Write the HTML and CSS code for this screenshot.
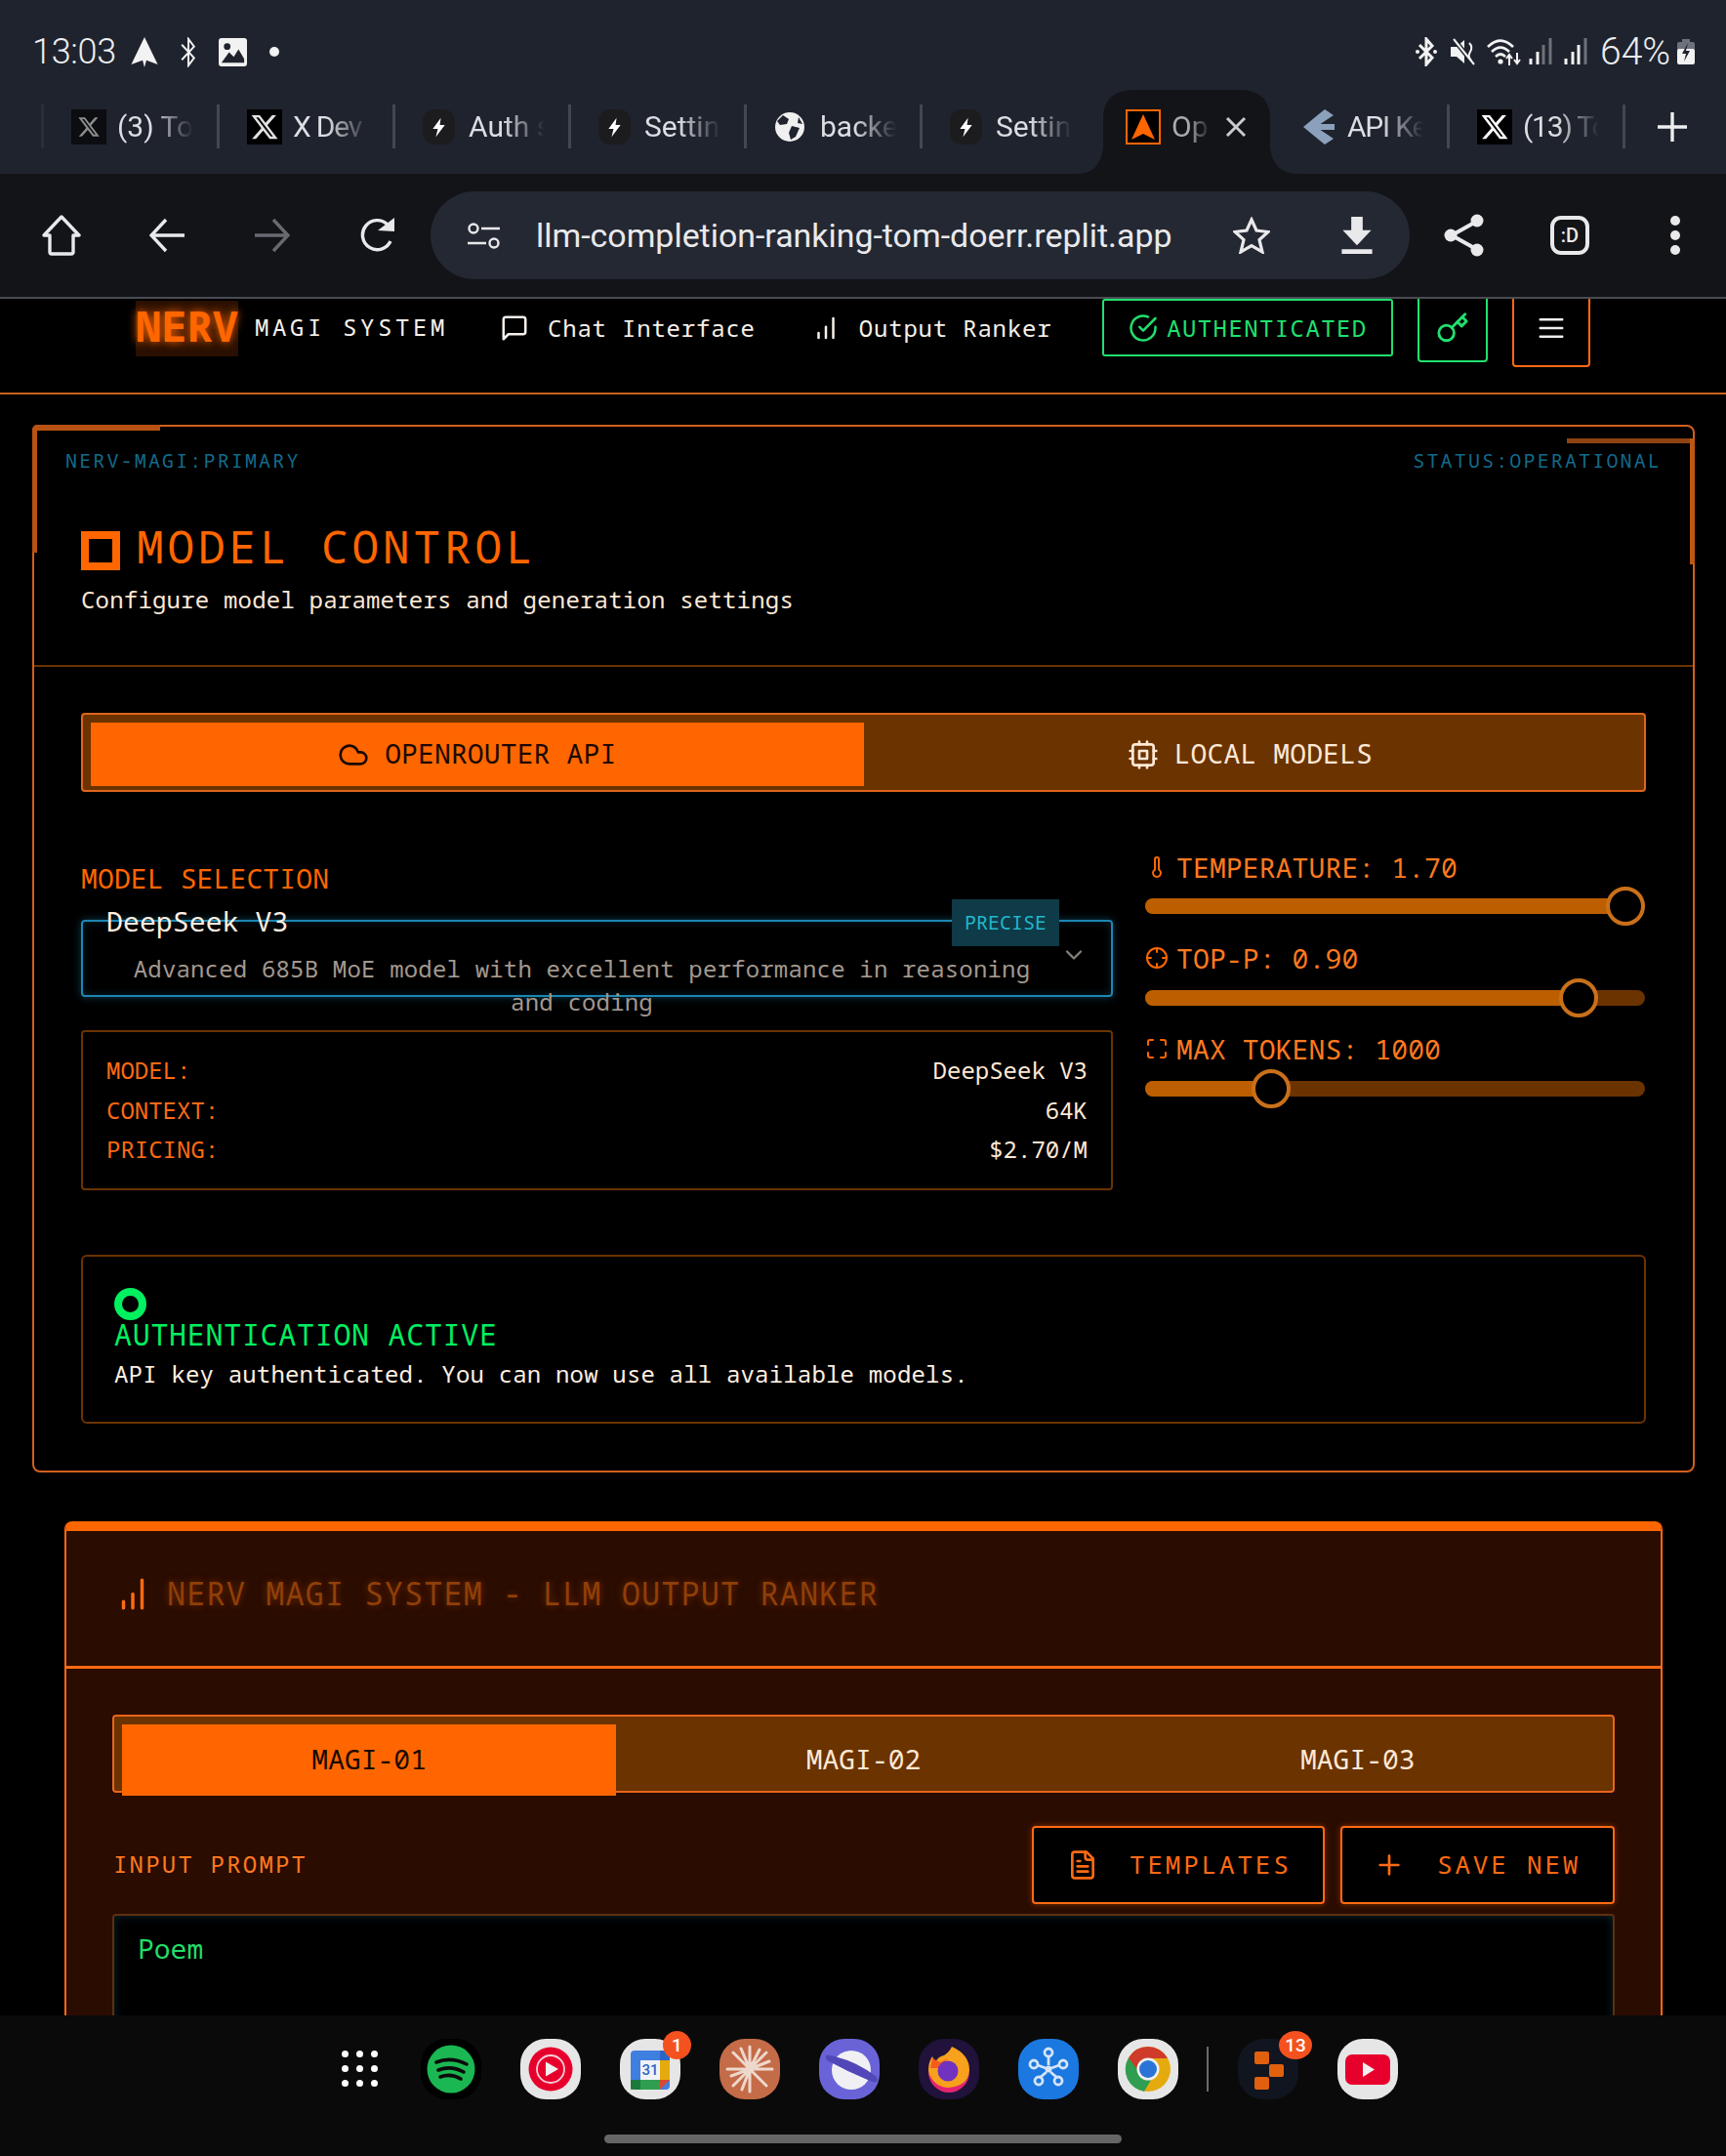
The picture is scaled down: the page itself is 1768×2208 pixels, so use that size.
FILE: index.html
```html
<!DOCTYPE html>
<html lang="en">
<head>
<meta charset="utf-8">
<title>NERV MAGI System</title>
<link rel="stylesheet" href="styles.css">
</head>
<body>
<div class="chrome">
  <div class="status">
    <div class="status-left">
      <span class="clock">13:03</span>
      <svg class="si si-nav" viewBox="0 0 28 32"><path d="M14 0 28 29 16 24.5 14 32 12 24.5 0 29Z" fill="#f2f2f2"/></svg>
      <svg class="si si-bt" viewBox="0 0 20 32"><path d="M3 8 16 22 10 30V2L16 10 3 24" fill="none" stroke="#f2f2f2" stroke-width="2"/></svg>
      <svg class="si si-img" viewBox="0 0 30 30"><rect width="30" height="30" rx="3" fill="#f2f2f2"/><circle cx="9" cy="9" r="3.5" fill="#1f232d"/><path d="M3 26 11 15 16 20 21 12 27 22V26Z" fill="#1f232d"/></svg>
      <span class="dot"></span>
    </div>
    <div class="status-right">
      <svg class="si si-bt2" viewBox="0 0 24 30"><path d="M5 8 18 21 12 28V2L18 9 5 22" fill="none" stroke="#f2f2f2" stroke-width="3"/><circle cx="3" cy="15" r="2" fill="#f2f2f2"/><circle cx="21" cy="15" r="2" fill="#f2f2f2"/></svg>
      <svg class="si si-mute" viewBox="0 0 27 30"><path d="M1 10H7L15 3V27L7 20H1Z" fill="#f2f2f2"/><path d="M4 2 25 28" stroke="#1f232d" stroke-width="5"/><path d="M4 2 25 28" stroke="#f2f2f2" stroke-width="2"/><path d="M20 6q4 4 1 9t1 9" fill="none" stroke="#f2f2f2" stroke-width="2"/></svg>
      <svg class="si si-wifi" viewBox="0 0 36 30"><path d="M2 10Q15-3 28 10M6 15Q15 6 24 15M10 20Q15 15 20 20" fill="none" stroke="#f2f2f2" stroke-width="2.6"/><circle cx="15" cy="25" r="2.6" fill="#f2f2f2"/><path d="M24 29V18M21 22l3-4 3 4M32 16V27M29 23l3 4 3-4" fill="none" stroke="#f2f2f2" stroke-width="2"/></svg>
      <svg class="si si-sig" viewBox="0 0 24 30"><path d="M2 28V22M9 28V15" stroke="#f2f2f2" stroke-width="3"/><path d="M15 28V8M22 28V1" stroke="#6d717a" stroke-width="3"/></svg>
      <svg class="si si-sig sig-b" viewBox="0 0 24 30"><path d="M2 28V22M9 28V15M15 28V8" stroke="#f2f2f2" stroke-width="3"/><path d="M22 28V1" stroke="#6d717a" stroke-width="3"/></svg>
      <span class="pct">64%</span>
      <svg class="si si-bat" viewBox="0 0 18 26"><path d="M5 0h8v3H5z" fill="#6d717a"/><rect y="3" width="18" height="9" rx="2" fill="#6d717a"/><rect y="10" width="18" height="16" rx="2" fill="#f2f2f2"/><path d="M11 4 5 15H9L7 23 13 12H9Z" fill="#1f232d"/></svg>
    </div>
  </div>
  <div class="tabs">
    <div class="tab sep first">
      <span class="fav fav-x dim"><svg viewBox="0 0 24 24"><path d="M18.2 2.3h3.3l-7.2 8.2 8.5 11.3h-6.7l-5.2-6.8-6 6.8H1.7l7.7-8.8L1.3 2.3h6.8l4.7 6.2zm-1.1 17.5h1.8L7.1 4.1h-2z"/></svg></span>
      <span class="tab-text">(3) To</span>
    </div>
    <div class="tab sep">
      <span class="fav fav-x"><svg viewBox="0 0 24 24"><path d="M18.2 2.3h3.3l-7.2 8.2 8.5 11.3h-6.7l-5.2-6.8-6 6.8H1.7l7.7-8.8L1.3 2.3h6.8l4.7 6.2zm-1.1 17.5h1.8L7.1 4.1h-2z"/></svg></span>
      <span class="tab-text tab-tight">X Dev</span>
    </div>
    <div class="tab sep">
      <span class="fav fav-bolt"><svg viewBox="0 0 32 32"><path d="M18 7 10 18H15L13 26 22 14H17Z" fill="#fff"/></svg></span>
      <span class="tab-text">Auth s</span>
    </div>
    <div class="tab sep">
      <span class="fav fav-bolt"><svg viewBox="0 0 32 32"><path d="M18 7 10 18H15L13 26 22 14H17Z" fill="#fff"/></svg></span>
      <span class="tab-text">Settin</span>
    </div>
    <div class="tab sep">
      <span class="fav fav-globe"><svg viewBox="0 0 32 32"><circle cx="16" cy="16" r="15" fill="#f0f0f0"/><path d="M9 4 15 8 13 13 6 14 3 10ZM18 15 26 17 22 26 17 29 15 22ZM25 6 29 13 24 12Z" fill="#1f232d"/></svg></span>
      <span class="tab-text">backe</span>
    </div>
    <div class="tab">
      <span class="fav fav-bolt"><svg viewBox="0 0 32 32"><path d="M18 7 10 18H15L13 26 22 14H17Z" fill="#fff"/></svg></span>
      <span class="tab-text">Settin</span>
    </div>
    <div class="tab tab-active">
      <svg class="tab-shape" viewBox="0 0 225 86"><path d="M0 86Q22 86 26 60V30Q26 0 58 0H165Q197 0 197 30V60Q201 86 225 86Z" fill="#121418"/></svg>
      <span class="fav fav-op"><svg viewBox="0 0 32 32"><path d="M16 3 28 29 16 23 4 29Z" fill="#ff6600"/></svg></span>
      <span class="tab-text tab-text-short">Op</span>
      <svg class="tab-close" viewBox="0 0 24 24"><path d="M3 3 21 21M21 3 3 21" stroke="#c9cbd0" stroke-width="3"/></svg>
    </div>
    <div class="tab sep">
      <span class="fav fav-api"><svg viewBox="0 0 36 36"><path d="M24 0 33 6 30 8 15 18 30 28 33 30 24 36 19 32 2 18 19 4Z" fill="#8aa0bb"/><path d="M14 15H34V21H14Z" fill="#8aa0bb"/></svg></span>
      <span class="tab-text tab-tight">API Ke</span>
    </div>
    <div class="tab sep">
      <span class="fav fav-x bright"><svg viewBox="0 0 24 24"><path d="M18.2 2.3h3.3l-7.2 8.2 8.5 11.3h-6.7l-5.2-6.8-6 6.8H1.7l7.7-8.8L1.3 2.3h6.8l4.7 6.2zm-1.1 17.5h1.8L7.1 4.1h-2z"/></svg></span>
      <span class="tab-text tab-tight">(13) To</span>
    </div>
    <svg class="tab-plus" viewBox="0 0 30 30"><path d="M15 0V30M0 15H30" stroke="#eceef0" stroke-width="3.4"/></svg>
  </div>
  <div class="toolbar">
    <svg class="tb tb-home" viewBox="0 0 40 42"><path d="M20 2 38 21H32V38Q32 40 30 40H10Q8 40 8 38V21H2Z" fill="none" stroke="#e9e9ec" stroke-width="3.4" stroke-linejoin="round"/></svg>
    <svg class="tb tb-back" viewBox="0 0 36 36"><path d="M17 2 2 18 17 34M2 18H36" fill="none" stroke="#e9e9ec" stroke-width="3.4"/></svg>
    <svg class="tb tb-fwd" viewBox="0 0 36 36"><path d="M19 2 34 18 19 34M34 18H0" fill="none" stroke="#676a70" stroke-width="3.4"/></svg>
    <svg class="tb tb-reload" viewBox="0 0 36 36"><path d="M31 24A15 15 0 1 1 28 7" fill="none" stroke="#e9e9ec" stroke-width="3.4"/><path d="M18 13 35 14V0Z" fill="#e9e9ec"/></svg>
    <div class="url">
      <svg class="url-tune" viewBox="0 0 33 27"><circle cx="6" cy="6" r="4.5" fill="none" stroke="#e9e9ec" stroke-width="2.4"/><path d="M14 6H33M0 21H19" stroke="#e9e9ec" stroke-width="2.6"/><circle cx="27" cy="21" r="4.5" fill="none" stroke="#e9e9ec" stroke-width="2.4"/></svg>
      <span class="url-text">llm-completion-ranking-tom-doerr.replit.app</span>
      <svg class="url-star" viewBox="0 0 38 38"><path d="M19 3 24 14 36 15.500 27 23.500 30 36 19 29.500 8 36 11 23.500 2 15.500 14 14Z" fill="none" stroke="#e9e9ec" stroke-width="3.2"/></svg>
      <svg class="url-dl" viewBox="0 0 32 40"><path d="M10 0H22V14H31L16 30 1 14H10ZM0 34H32V39H0Z" fill="#e9e9ec"/></svg>
    </div>
    <svg class="tb tb-share" viewBox="0 0 42 44"><path d="M33 8 8 22 33 36" fill="none" stroke="#e9e9ec" stroke-width="4"/><circle cx="34" cy="7" r="6.500" fill="#e9e9ec"/><circle cx="7" cy="22" r="6.500" fill="#e9e9ec"/><circle cx="34" cy="37" r="6.500" fill="#e9e9ec"/></svg>
    <span class="tb-d">:D</span>
    <span class="tb-more"><i></i><i></i><i></i></span>
  </div>
</div>

<header class="topnav">
  <div class="brand"><span class="nerv">NERV</span><span class="magi">MAGI SYSTEM</span></div>
  <a class="navlink nav-chat"><svg class="lu lu-28" viewBox="0 0 24 24"><path d="M21 15a2 2 0 0 1-2 2H7l-4 4V5a2 2 0 0 1 2-2h14a2 2 0 0 1 2 2z"/></svg>Chat Interface</a>
  <a class="navlink nav-rank"><svg class="lu lu-28" viewBox="0 0 24 24"><path d="M6 20v-4M12 20v-9M18 20V4"/></svg>Output Ranker</a>
  <span class="auth-pill"><svg class="lu lu-28" viewBox="0 0 24 24"><path d="M22 11.08V12a10 10 0 1 1-5.93-9.14"/><path d="M22 4 12 14.010l-3-3"/></svg>AUTHENTICATED</span>
  <span class="key-btn"><svg class="lu lu-32" viewBox="0 0 24 24"><circle cx="7.500" cy="15.500" r="5.500"/><path d="m21 2-9.600 9.600"/><path d="m15.500 7.500 3 3L22 7l-3-3"/></svg></span>
  <span class="menu-btn"><svg class="lu lu-28 lu-white" viewBox="0 0 24 24"><path d="M3 5h18M3 12h18M3 19h18"/></svg></span>
</header>

<section class="panel">
  <span class="accent accent-tl-h"></span><span class="accent accent-tl-v"></span>
  <span class="accent accent-tr-h"></span><span class="accent accent-tr-v"></span>
  <div class="panel-head">
    <div class="tags"><span>NERV-MAGI:PRIMARY</span><span>STATUS:OPERATIONAL</span></div>
    <h1 class="title"><span class="title-mark"></span>MODEL CONTROL</h1>
    <p class="subtitle">Configure model parameters and generation settings</p>
  </div>
  <div class="panel-body">
    <div class="segment">
      <button class="seg seg-on"><svg class="lu lu-30" viewBox="0 0 24 24"><path d="M17.500 19H9a7 7 0 1 1 6.710-9h1.790a4.500 4.500 0 1 1 0 9Z"/></svg>OPENROUTER API</button>
      <button class="seg"><svg class="lu lu-30" viewBox="0 0 24 24"><rect x="4" y="4" width="16" height="16" rx="2"/><rect x="9" y="9" width="6" height="6"/><path d="M15 2v2M15 20v2M2 15h2M2 9h2M20 15h2M20 9h2M9 2v2M9 20v2"/></svg>LOCAL MODELS</button>
    </div>
    <div class="controls">
      <div class="col-left">
        <label class="sel-label">MODEL SELECTION</label>
        <div class="select">
          <span class="sel-name">DeepSeek V3</span>
          <span class="sel-badge">PRECISE</span>
          <p class="sel-desc">Advanced 685B MoE model with excellent performance in reasoning and coding</p>
          <svg class="lu sel-chev" viewBox="0 0 24 24"><path d="m6 9 6 6 6-6"/></svg>
        </div>
        <dl class="info">
          <div class="info-row"><dt>MODEL:</dt><dd>DeepSeek V3</dd></div>
          <div class="info-row"><dt>CONTEXT:</dt><dd>64K</dd></div>
          <div class="info-row"><dt>PRICING:</dt><dd>$2.70/M</dd></div>
        </dl>
      </div>
      <div class="col-right">
        <div class="slider">
          <div class="sl-label"><svg class="lu lu-24" viewBox="0 0 24 24"><path d="M14 4v10.540a4 4 0 1 1-4 0V4a2 2 0 0 1 4 0Z"/></svg>TEMPERATURE: 1.70</div>
          <div class="track"><span class="fill" style="width:96%"></span><span class="thumb" style="left:96.100%"></span></div>
        </div>
        <div class="slider">
          <div class="sl-label sl-up"><svg class="lu lu-24" viewBox="0 0 24 24"><circle cx="12" cy="12" r="10"/><path d="M22 12h-4M6 12H2M12 6V2M12 22v-4"/></svg>TOP-P: 0.90</div>
          <div class="track"><span class="fill" style="width:86.700%"></span><span class="thumb" style="left:86.700%"></span></div>
        </div>
        <div class="slider">
          <div class="sl-label sl-up"><svg class="lu lu-24" viewBox="0 0 24 24"><path d="M8 3H5a2 2 0 0 0-2 2v3M21 8V5a2 2 0 0 0-2-2h-3M3 16v3a2 2 0 0 0 2 2h3M16 21h3a2 2 0 0 0 2-2v-3"/></svg>MAX TOKENS: 1000</div>
          <div class="track"><span class="fill" style="width:25.200%"></span><span class="thumb" style="left:25.200%"></span></div>
        </div>
      </div>
    </div>
    <div class="auth-box">
      <span class="auth-ring"></span>
      <h3 class="auth-title">AUTHENTICATION ACTIVE</h3>
      <p class="auth-text">API key authenticated. You can now use all available models.</p>
    </div>
  </div>
</section>

<section class="ranker">
  <div class="ranker-head">
    <svg class="lu lu-rank" viewBox="0 0 24 24"><path d="M6 20v-4M12 20v-9M18 20V2"/></svg>
    <h2 class="ranker-title">NERV MAGI SYSTEM - LLM OUTPUT RANKER</h2>
  </div>
  <div class="ranker-body">
    <div class="mtabs">
      <button class="mtab mtab-on">MAGI-01</button>
      <button class="mtab">MAGI-02</button>
      <button class="mtab">MAGI-03</button>
    </div>
    <div class="prompt-row">
      <span class="prompt-label">INPUT PROMPT</span>
      <button class="act act-tpl"><svg class="lu lu-30" viewBox="0 0 24 24"><path d="M15 2H6a2 2 0 0 0-2 2v16a2 2 0 0 0 2 2h12a2 2 0 0 0 2-2V7Z"/><path d="M14 2v4a2 2 0 0 0 2 2h4"/><path d="M10 9H8M16 13H8M16 17H8"/></svg><span class="act-text">TEMPLATES</span></button>
      <button class="act act-save"><svg class="lu lu-30" viewBox="0 0 24 24"><path d="M5 12h14M12 5v14"/></svg><span class="act-text">SAVE NEW</span></button>
    </div>
    <div class="prompt-box">Poem</div>
  </div>
</section>

<footer class="dock">
  <div class="dock-row">
    <span class="apps"><i></i><i></i><i></i><i></i><i></i><i></i><i></i><i></i><i></i></span>
    <span class="app app-black"><svg viewBox="0 0 62 62"><circle cx="31" cy="31" r="24.500" fill="#1ed760" fill-opacity=".85"/><path d="M16 24Q31 18 47 26M18 32Q31 27 44 34M20 39Q31 35 41 41" fill="none" stroke="#0a0a0a" stroke-width="3.600" stroke-linecap="round"/></svg></span>
    <span class="app app-light"><svg viewBox="0 0 62 62"><circle cx="31" cy="31" r="22.500" fill="#e8002d"/><circle cx="31" cy="31" r="14" fill="none" stroke="#f4d0d8" stroke-width="1.800"/><path d="M26 23.500 39 31 26 38.500Z" fill="#f0f0f0"/></svg></span>
    <span class="app app-light"><svg viewBox="0 0 62 62"><rect x="11" y="12" width="40" height="40" rx="4" fill="#3f7fe0"/><path d="M41 12h6a4 4 0 0 1 4 4v6H41z" fill="#2a66c8"/><rect x="41" y="22" width="10" height="20" fill="#e5ab0e"/><rect x="11" y="42" width="30" height="10" fill="#2f9e50"/><path d="M11 42h10v10h-6a4 4 0 0 1-4-4z" fill="#1c7a3c"/><path d="M41 42h10L41 52z" fill="#d9492f"/><rect x="21" y="22" width="20" height="20" fill="#f0f2f6"/><text x="31" y="37" class="cal-num">31</text></svg><span class="badge">1</span></span>
    <span class="app app-claude"><svg viewBox="0 0 62 62"><g stroke="#eed8cc" stroke-width="3" stroke-linecap="round"><path d="M31 31V8M31 31V54M31 31H8M31 31H54M31 31 14 14M31 31 48 14M31 31 14 48M31 31 48 48M31 31 22 10M31 31 41 11M31 31 12 38M31 31 51 23M31 31 23 52"/></g></svg></span>
    <span class="app app-inet"><svg viewBox="0 0 62 62"><circle cx="33" cy="32" r="20" fill="#f0f0f4"/><path d="M8 22Q3 14 16 18Q40 24 59 39Q62 47 52 43Q30 34 8 22Z" fill="#5147b8"/></svg></span>
    <span class="app app-fox"><svg viewBox="0 0 62 62"><path d="M34 8Q52 16 52 32A21 21 0 1 1 10 32Q10 24 14 18L17 24Q20 18 26 17Q31 14 34 8Z" fill="#f7a11c"/><path d="M10 34A21 21 0 0 0 52 34Q50 48 31 50Q16 50 10 34Z" fill="#e5246f"/><path d="M14 20 22 24 30 20 20 30 12 30Z" fill="#f25c1f"/><circle cx="30" cy="33" r="10.500" fill="#7132c0"/></svg></span>
    <span class="app app-conn"><svg viewBox="0 0 62 62"><g fill="none" stroke="#d5e4f8" stroke-width="2.800"><circle cx="31" cy="14" r="4"/><circle cx="16" cy="26" r="4"/><circle cx="46" cy="26" r="4"/><circle cx="21" cy="43" r="4"/><circle cx="41" cy="43" r="4"/><path d="M31 18V27M20 27 28 30M42 27 34 30M23 39 29 34M39 39 33 34"/></g><circle cx="31" cy="31" r="3.500" fill="#d5e4f8"/></svg></span>
    <span class="app app-light"><svg viewBox="0 0 62 62"><circle cx="31" cy="31" r="23" fill="#e5ab0e"/><path d="M31 8A23 23 0 0 0 11 19.500L21 37 31 20H51A23 23 0 0 0 31 8Z" fill="#cf3a2a"/><path d="M11 19.500A23 23 0 0 0 27 54L37 37H24Z" fill="#2f9e50"/><circle cx="31" cy="31" r="11.500" fill="#f0f0f0"/><circle cx="31" cy="31" r="9" fill="#2a74d8"/></svg></span>
    <span class="dock-div"></span>
    <span class="app app-navy"><svg viewBox="0 0 62 62"><g fill="#e0600e"><rect x="17" y="13" width="15" height="13" rx="2"/><rect x="32" y="26" width="15" height="13" rx="2"/><rect x="17" y="39" width="15" height="13" rx="2"/></g></svg><span class="badge badge-wide">13</span></span>
    <span class="app app-light"><svg viewBox="0 0 62 62"><rect x="8" y="16" width="46" height="31" rx="7" fill="#e8002d"/><path d="M26 24 38 31.500 26 39Z" fill="#f0f0f0"/></svg></span>
  </div>
  <div class="home-bar"></div>
</footer>
</body>
</html>
```
FILE: styles.css
```css
* { box-sizing: border-box; }
html, body { margin: 0; padding: 0; }
body {
  width: 1768px;
  height: 2208px;
  overflow: hidden;
  position: relative;
  background: #000;
  color: #ffe8d6;
  font-family: "Noto Sans Mono", "DejaVu Sans Mono", "Liberation Mono", monospace;
  font-size: 24px;
}
button { font: inherit; color: inherit; border: 0; background: none; padding: 0; }
h1, h2, h3, p, dl, dd { margin: 0; font-weight: 400; }

/* lucide-like icons */
.lu { fill: none; stroke: currentColor; stroke-width: 2; stroke-linecap: round; stroke-linejoin: round; flex: none; }
.lu-24 { width: 24px; height: 24px; }
.lu-28 { width: 30px; height: 30px; }
.lu-30 { width: 32px; height: 32px; }
.lu-32 { width: 34px; height: 34px; }
.lu-white { color: #eee; }

/* Browser chrome */
.chrome {
  position: relative;
  z-index: 5;
  height: 306px;
  background: #121418;
  border-bottom: 2px solid #4a4c54;
  font-family: Roboto, "Liberation Sans", sans-serif;
  color: #eceef0;
}
.status {
  height: 90px;
  background: #1f232d;
  display: flex;
  justify-content: space-between;
  align-items: center;
  padding: 16px 32px 0 33px;
}
.status-left, .status-right { display: flex; align-items: center; }
.clock { font-size: 36px; font-weight: 300; width: 101px; letter-spacing: -.3px; }
.si { flex: none; display: block; }
.si-nav { width: 28px; height: 31px; }
.si-bt { width: 20px; height: 31px; margin-left: 21px; }
.si-img { width: 29px; height: 29px; margin-left: 21px; }
.dot { width: 10px; height: 10px; border-radius: 50%; background: #f2f2f2; margin-left: 23px; }
.si-bt2 { width: 24px; height: 30px; }
.si-mute { width: 27px; height: 30px; margin-left: 12px; }
.si-wifi { width: 36px; height: 30px; margin-left: 10px; }
.si-sig { width: 24px; height: 30px; margin-left: 8px; }
.sig-b { margin-left: 12px; }
.pct { font-size: 39px; font-weight: 300; margin-left: 13px; width: 79px; }
.si-bat { width: 18px; height: 26px; }

.tabs {
  height: 88px;
  background: #1f232d;
  display: flex;
  padding-left: 45px;
  align-items: flex-start;
  padding-top: 17px;
}
.tab {
  width: 180px;
  height: 45px;
  flex: none;
  display: flex;
  align-items: center;
  padding-left: 28px;
  position: relative;
  border-right: 3px solid transparent;
}
.tab.sep { border-right-color: #434750; }
.tab.first { box-shadow: -3px 0 0 #2b2f39; }
.tab-text {
  font-size: 30px;
  font-weight: 400;
  margin-left: 11px;
  width: 78px;
  overflow: hidden;
  white-space: nowrap;
  color: #dcdee2;
  -webkit-mask-image: linear-gradient(90deg, #000 45%, transparent 100%);
  mask-image: linear-gradient(90deg, #000 45%, transparent 100%);
  position: relative;
}
.tab-tight { letter-spacing: -1.2px; }
.tab-text-short { width: 40px; color: #a8aaae; }
.fav { width: 36px; height: 36px; flex: none; display: flex; align-items: center; justify-content: center; position: relative; }
.fav svg { width: 100%; height: 100%; display: block; }
.fav-x { background: #000; }
.fav-x svg { width: 30px; height: 30px; fill: #e2e2e2; }
.fav-x.dim { background: #0c0d10; }
.fav-x.dim svg { fill: #8d8d8d; width: 24px; height: 24px; }
.fav-x.bright svg { fill: #fff; }
.fav-bolt { background: #1c1c1e; border-radius: 12px; width: 33px; height: 36px; margin-right: 3px; }
.fav-globe { width: 32px; height: 34px; margin-right: 4px; }
.fav-op { background: #000; border: 2px solid #ff6600; }
.fav-api svg { width: 36px; height: 36px; }
.tab-active { z-index: 0; }
.tab-shape { position: absolute; left: -21px; top: -15px; width: 225px; height: 86px; z-index: -1; }
.tab-close { width: 24px; height: 24px; position: absolute; left: 129px; top: 11px; }
.tab-plus { width: 30px; height: 30px; flex: none; margin: 8px 0 0 33px; }

.toolbar {
  height: 126px;
  display: flex;
  align-items: center;
  padding: 0 0 0 43px;
  position: relative;
}
.tb { flex: none; display: block; }
.tb-home { width: 40px; height: 42px; }
.tb-back { width: 36px; height: 36px; margin-left: 70px; }
.tb-fwd { width: 36px; height: 36px; margin-left: 72px; }
.tb-reload { width: 36px; height: 36px; margin-left: 72px; }
.url {
  margin-left: 36px;
  width: 1003px;
  height: 90px;
  border-radius: 45px;
  background: #242832;
  flex: none;
  display: flex;
  align-items: center;
  padding-left: 38px;
}
.url-tune { width: 33px; height: 27px; flex: none; }
.url-text { font-size: 33.900px; font-weight: 400; margin-left: 37px; white-space: nowrap; width: 675px; flex: none; color: #e9e9ec; }
.url-star { width: 38px; height: 38px; flex: none; margin-left: 39px; }
.url-dl { width: 32px; height: 39px; flex: none; margin-left: 73px; }
.tb-share { width: 42px; height: 44px; margin-left: 35px; }
.tb-d {
  width: 40px; height: 40px; flex: none; margin-left: 67px;
  border: 4px solid #e9e9ec; border-radius: 11px;
  font-size: 20px; font-weight: 500; display: flex; align-items: center; justify-content: center;
  color: #e9e9ec;
}
.tb-more { display: flex; flex-direction: column; gap: 5px; margin-left: 83px; }
.tb-more i { display: block; width: 10px; height: 10px; border-radius: 50%; background: #e9e9ec; }

/* Top nav */
.topnav {
  height: 98px;
  border-bottom: 2px solid #c9601f;
  padding-left: 139px;
  display: flex;
  align-items: flex-start;
}
.topnav > * { height: 59px; display: flex; align-items: center; flex: none; }
.brand { gap: 17px; }
.nerv {
  font-size: 43.750px;
  font-weight: 700;
  width: 105px;
  height: 57px;
  margin-top: 1px;
  padding-bottom: 6px;
  background: #2a1000;
  color: #ff6600;
  display: flex;
  align-items: center;
  text-shadow: 0 0 10px #ff6600;
}
.magi { font-size: 24px; letter-spacing: 3.600px; color: #f6f0ea; padding-bottom: 2px; }
.navlink { font-size: 24px; letter-spacing: .8px; color: #f6f0ea; gap: 19px; }
.nav-chat { margin-left: 53px; }
.nav-rank { margin-left: 57px; gap: 19px; }
.auth-pill {
  margin-left: 52px;
  width: 298px;
  border: 2px solid #21e06e;
  border-radius: 3px;
  color: #21e06e;
  font-size: 24px;
  letter-spacing: 1.400px;
  justify-content: center;
  gap: 9px;
}
.key-btn, .menu-btn {
  justify-content: center;
  border-radius: 4px;
  position: relative;
}
.topnav .key-btn {
  margin-left: 25px;
  width: 72px;
  height: 70px;
  margin-top: -5px;
  border: 2px solid #21e06e;
  color: #21e06e;
}
.topnav .menu-btn {
  margin-left: 25px;
  width: 80px;
  height: 80px;
  margin-top: -10px;
  border: 2px solid #ff6a13;
}

/* Model control panel */
.panel {
  position: relative;
  margin: 31px 32px 0 33px;
  height: 1073px;
  border: 2px solid #d1601c;
  border-radius: 8px;
}
.accent { position: absolute; background: #b85212; }
.accent-tl-h { left: -2px; top: -2px; width: 131px; height: 6px; border-radius: 8px 0 0 0; }
.accent-tl-v { left: -2px; top: -2px; width: 5px; height: 131px; border-radius: 8px 0 0 0; }
.accent-tr-h { right: -2px; top: 12px; width: 131px; height: 5px; background: #8f4312; }
.accent-tr-v { right: -2px; top: 12px; width: 5px; height: 129px; background: #bf5610; }
.panel-head {
  height: 246px;
  border-bottom: 2px solid #6b3300;
  padding: 23px 48px 0;
}
.tags {
  display: flex;
  justify-content: space-between;
  margin: 0 -16px 0 -16px;
  font-size: 20px;
  line-height: 24px;
  letter-spacing: 2.150px;
  color: #136a8a;
}
.title {
  display: flex;
  align-items: center;
  margin-top: 47px;
  height: 56px;
  font-size: 46px;
  line-height: 56px;
  letter-spacing: 3.900px;
  color: #ff6600;
  white-space: pre;
}
.title-mark { width: 40px; height: 40px; border: 8px solid #ff6600; margin-right: 17px; margin-top: 10px; flex: none; }
.subtitle { margin-top: 12px; font-size: 24px; line-height: 30px; letter-spacing: .2px; color: #ffe8d6; }
.panel-body { padding: 47px 48px 0; }
.segment {
  height: 81px;
  border: 2px solid #e0651c;
  border-radius: 4px;
  background: #6b3300;
  padding: 8px 8px;
  display: grid;
  grid-template-columns: 1fr 1fr;
}
.seg {
  height: 65px;
  padding-bottom: 3px;
  font-size: 28px;
  letter-spacing: .14px;
  display: flex;
  align-items: center;
  justify-content: center;
  gap: 16px;
  color: #ffe8d6;
}
.seg .lu { margin-top: 3px; }
.seg-on { background: #ff6600; color: #1a0800; }
.controls {
  display: grid;
  grid-template-columns: 1057px 512px;
  column-gap: 33px;
  margin-top: 57px;
  height: 351px;
}
.col-left { padding-top: 11px; }
.sel-label { display: block; font-size: 28px; line-height: 40px; letter-spacing: .14px; color: #ff6600; }
.select {
  position: relative;
  margin-top: 23px;
  height: 79px;
  border: 2px solid #1c86b2;
  border-radius: 4px;
  padding: 31px 68px 0 37px;
  box-shadow: 0 0 8px rgba(28,134,178,.45), inset 0 0 8px rgba(28,134,178,.25);
}
.sel-name { position: absolute; left: 24px; top: -23px; font-size: 28px; line-height: 44px; color: #ffeee0; background: transparent; letter-spacing: .14px; }
.sel-badge {
  position: absolute;
  left: 890px;
  top: -23px;
  width: 110px;
  height: 48px;
  padding-bottom: 2px;
  background: #0f3a47;
  color: #22b8cf;
  font-size: 20px;
  display: flex;
  align-items: center;
  justify-content: center;
}
.sel-desc { font-size: 24px; line-height: 34px; letter-spacing: .18px; text-align: center; color: #a3988e; }
.sel-chev { position: absolute; right: 24px; top: 20px; width: 28px; height: 28px; color: #857f7a; }
.info {
  margin-top: 34px;
  height: 164px;
  border: 2px solid #6b3300;
  border-radius: 4px;
  padding: 21px 24px 0;
}
.info-row { display: flex; justify-content: space-between; height: 40.500px; line-height: 36px; }
.info dt { color: #ff6a13; }
.col-right { display: flex; flex-direction: column; gap: 25.500px; }
.sl-label { display: flex; align-items: center; height: 40px; font-size: 28px; letter-spacing: .14px; color: #ff7a1f; white-space: pre; }
.sl-up { padding-bottom: 2px; }
.sl-label .lu { margin-right: 8px; color: #ff6600; }
.track { position: relative; height: 16px; margin-top: 12px; background: #6b3300; border-radius: 8px; }
.fill { display: block; height: 100%; background: #bd5f00; border-radius: 8px; }
.thumb {
  position: absolute;
  top: 50%;
  width: 40px;
  height: 40px;
  margin: -20px 0 0 -20px;
  border-radius: 50%;
  background: #000;
  border: 4px solid #c9701a;
}
.auth-box {
  margin-top: 66px;
  height: 173px;
  border: 2px solid #6b3300;
  border-radius: 6px;
  padding: 32px 32px 0;
}
.auth-ring { display: block; width: 33px; height: 33px; border-radius: 50%; border: 8px solid #00f060; }
.auth-title { font-size: 30px; line-height: 34px; letter-spacing: .7px; color: #00f060; margin-top: -2px; }
.auth-text { font-size: 24px; line-height: 34px; letter-spacing: .18px; margin-top: 6px; color: #ffeee0; }

/* Ranker */
.ranker {
  margin: 50px 65px 0 66px;
  height: 600px;
  background: #2a0c00;
  border: 2px solid #ff6a13;
  border-top: 10px solid #ff6600;
  border-radius: 8px 8px 0 0;
}
.ranker-head {
  height: 141px;
  border-bottom: 3px solid #ff6a13;
  display: flex;
  align-items: center;
  padding: 0 0 9px 47px;
  gap: 16px;
}
.ranker-head .lu { margin-top: 2px; }
.lu-rank { width: 38px; height: 38px; color: #ff6a13; stroke-width: 2.200; margin-left: 2px; }
.ranker-title {
  font-size: 32px;
  letter-spacing: 1.050px;
  color: #8f3f08;
  text-shadow: 0 0 8px rgba(255,102,0,.35);
  white-space: pre;
  padding-bottom: 2px;
}
.ranker-body { padding: 47px 47px 0; }
.mtabs {
  position: relative;
  height: 80px;
  background: #6b3300;
  border: 2px solid #e8651b;
  border-radius: 4px;
  padding: 8px 8px 0;
  display: grid;
  grid-template-columns: repeat(3, 1fr);
}
.mtab { height: 73px; padding-bottom: 3px; font-size: 28px; color: #ffe8d6; }
.mtab-on { background: #ff6600; color: #1a0800; }
.prompt-row { display: flex; align-items: center; margin-top: 34px; height: 80px; gap: 16px; }
.prompt-label { font-size: 24px; letter-spacing: 2.200px; color: #ff7a1f; margin-right: auto; margin-left: 1px; padding-bottom: 3px; }
.act {
  height: 80px;
  background: #000;
  border: 2px solid #ff6a13;
  border-radius: 4px;
  color: #ff6a13;
  font-size: 26px;
  letter-spacing: 2.800px;
  display: flex;
  align-items: center;
  box-shadow: 0 0 6px rgba(255,102,0,.4);
}
.act-text { padding-bottom: 3px; }
.act-tpl { width: 300px; padding-left: 34px; gap: 32px; }
.act-save { width: 281px; padding-left: 32px; gap: 33px; }
.prompt-box {
  margin-top: 10px;
  height: 200px;
  background: #000;
  border: 2px solid #5c3010;
  border-radius: 4px;
  padding: 14px 24px;
  font-size: 28px;
  color: #22dd66;
  box-shadow: inset 0 0 10px rgba(20,110,140,.35);
}

/* Dock */
.dock {
  position: absolute;
  left: 0;
  top: 2064px;
  width: 1768px;
  height: 144px;
  background: #0a0a0a;
  z-index: 6;
}
.dock-row { position: relative; height: 122px; display: flex; padding: 24px 0 0 350px; }
.apps { display: grid; grid-template-columns: repeat(3, 7px); grid-auto-rows: 7px; column-gap: 8px; row-gap: 8px; width: 37px; margin-top: 12px; height: 37px; flex: none; }
.apps i { display: block; width: 7px; height: 7px; border-radius: 50%; background: #fff; }
.app {
  position: relative;
  display: block;
  width: 62px;
  height: 62px;
  flex: none;
  border-radius: 42%;
  margin-left: 40px;
}
.app svg { display: block; width: 62px; height: 62px; }
.apps + .app { margin-left: 44px; }
.app-black { background: #000; }
.app-light { background: #e6e6e6; }
.app-claude { background: #c46b48; }
.app-inet { background: #6a63d8; overflow: hidden; }
.app-fox { background: #20123a; }
.app-conn { background: #1b78e0; }
.app-navy { background: #10151f; margin-left: 30px; }
.dock-div { width: 2px; height: 46px; background: #6a6a6a; margin: 8px 0 0 29px; flex: none; }
.cal-num { font-family: Roboto, "Liberation Sans", sans-serif; font-size: 15px; font-weight: 500; fill: #2a66c8; text-anchor: middle; }
.badge {
  position: absolute;
  left: 44px;
  top: -8px;
  width: 29px;
  height: 29px;
  border-radius: 50%;
  background: #f4511e;
  color: #fff;
  font: 500 19px/29px Roboto, "Liberation Sans", sans-serif;
  text-align: center;
}
.badge-wide { left: 42px; width: 34px; }
.home-bar { width: 530px; height: 9px; border-radius: 5px; background: #666; margin: 0 0 0 619px; }
```
